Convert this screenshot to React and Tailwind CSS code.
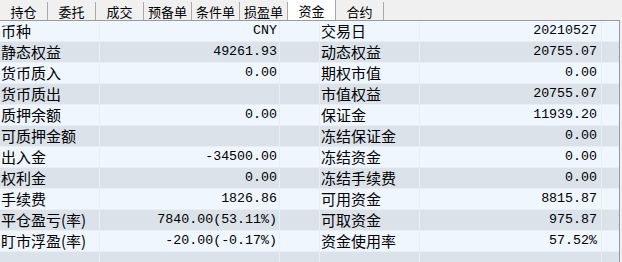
const tabs = ['持仓', '委托', '成交', '预备单', '条件单', '损盈单', '资金', '合约'];

const rows = [
  ['币种', 'CNY', '交易日', '20210527'],
  ['静态权益', '49261.93', '动态权益', '20755.07'],
  ['货币质入', '0.00', '期权市值', '0.00'],
  ['货币质出', '', '市值权益', '20755.07'],
  ['质押余额', '0.00', '保证金', '11939.20'],
  ['可质押金额', '', '冻结保证金', '0.00'],
  ['出入金', '-34500.00', '冻结资金', '0.00'],
  ['权利金', '0.00', '冻结手续费', '0.00'],
  ['手续费', '1826.86', '可用资金', '8815.87'],
  ['平仓盈亏(率)', '7840.00(53.11%)', '可取资金', '975.87'],
  ['盯市浮盈(率)', '-20.00(-0.17%)', '资金使用率', '57.52%'],
  ['', '', '', ''],
];

const cjk = "font-['Noto_Sans_CJK_SC',sans-serif]";
const mono = "font-['Liberation_Mono','Noto_Sans_CJK_SC',monospace]";

export default function App() {
  return (
    <div className="w-[622px] h-[262px] bg-[#f0f0f0] overflow-hidden text-black">
      {/* Tabs */}
      <div className={`flex h-[20px] ${cjk} text-[13px]`}>
        {tabs.map((t) => (
          <div key={t}
            className={`w-[48px] flex items-center justify-center border-r border-[#a9a9a9] leading-none ${
              t === '资金' ? 'bg-white' : 'mt-[2px]'
            }`}>
            {t}
          </div>
        ))}
      </div>

      {/* Table */}
      <div className="w-[620px] border-t border-r border-[#9a9a9a]">
        {rows.map(([l1, v1, l2, v2], i) => (
          <div key={i}
            className={`flex h-[21px] border-b border-[#e9eef4] ${i % 2 === 0 ? 'bg-[#eff6fe]' : 'bg-[#dbe2ea]'}`}>
            <div className={`w-[100px] border-r border-[#e9eef4] pl-[1px] ${cjk} text-[15px] leading-[20px] whitespace-nowrap`}>{l1}</div>
            <div className={`w-[180px] border-r border-[#e9eef4] pr-[2px] text-right ${mono} text-[13.3px] leading-[20px] whitespace-nowrap`}>{v1}</div>
            <div className="w-[40px] border-r border-[#e9eef4]" />
            <div className={`w-[100px] border-r border-[#e9eef4] pl-[1px] ${cjk} text-[15px] leading-[20px] whitespace-nowrap`}>{l2}</div>
            <div className={`w-[182px] border-r border-[#e9eef4] pr-[4px] text-right ${mono} text-[13.3px] leading-[20px] whitespace-nowrap`}>{v2}</div>
            <div className="flex-1" />
          </div>
        ))}
      </div>
    </div>
  );
}
